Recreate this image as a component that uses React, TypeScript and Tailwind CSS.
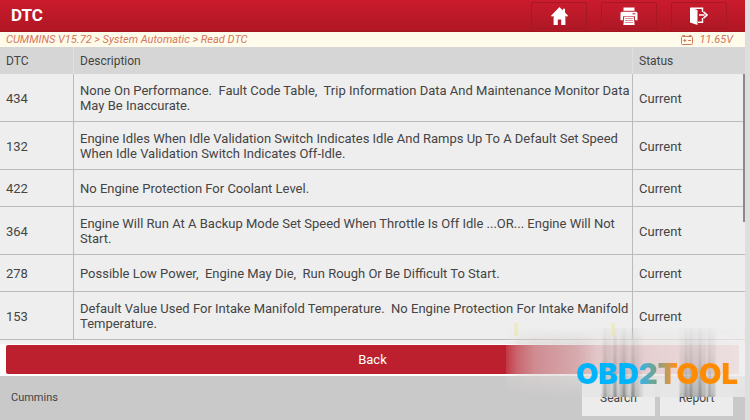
'use client';

import React from 'react';

interface TroubleCode {
  code: string;
  description: string;
  status: string;
}

const CODES: TroubleCode[] = [
  {
    code: '434',
    description: 'None On Performance.  Fault Code Table,  Trip Information Data And Maintenance Monitor Data May Be Inaccurate.',
    status: 'Current',
  },
  {
    code: '132',
    description: 'Engine Idles When Idle Validation Switch Indicates Idle And Ramps Up To A Default Set Speed When Idle Validation Switch Indicates Off-Idle.',
    status: 'Current',
  },
  { code: '422', description: 'No Engine Protection For Coolant Level.', status: 'Current' },
  {
    code: '364',
    description: 'Engine Will Run At A Backup Mode Set Speed When Throttle Is Off Idle ...OR... Engine Will Not Start.',
    status: 'Current',
  },
  { code: '278', description: 'Possible Low Power,  Engine May Die,  Run Rough Or Be Difficult To Start.', status: 'Current' },
  {
    code: '153',
    description: 'Default Value Used For Intake Manifold Temperature.  No Engine Protection For Intake Manifold Temperature.',
    status: 'Current',
  },
];

// [x, width, opacity]
const STREAKS = [
  [97, 4, 0.55],
  [102, 3, 0.35],
  [107, 4, 0.7],
  [113, 2, 0.5],
  [116, 4, 0.75],
  [121, 2, 0.4],
  [125, 4, 0.75],
  [130, 3, 0.4],
  [134, 2, 0.25],
  [174, 3, 0.35],
  [178, 4, 0.65],
  [183, 4, 0.75],
  [188, 3, 0.5],
  [192, 4, 0.75],
  [197, 3, 0.5],
  [202, 3, 0.65],
  [206, 3, 0.4],
];

function HomeIcon() {
  return (
    <svg width="17" height="18" viewBox="0 0 17 18" fill="#fff" aria-hidden="true">
      <path d="M8.5 0 0 8.7l1 1.1 1.6-1V18h4.2v-5.4h3.4V18h4.2V8.8l1.6 1 1-1.1-3-3.1V1.8h-2.2v1.6z" />
    </svg>
  );
}

function PrinterIcon() {
  return (
    <svg width="18" height="18" viewBox="0 0 18 18" aria-hidden="true">
      <path d="M3.5 3.8V.5h11v3.3z" fill="#fff" />
      <path d="M2 4.8h14q1.5 0 1.5 1.5v6.9h-2.6V9.2H3.1v4H.5V6.3q0-1.5 1.5-1.5z" fill="#fff" />
      <path d="M12.5 6.8h3" stroke="#c21a2b" strokeWidth="1" />
      <path d="M4.3 9.8h9.4l1 8.2H3.3z" fill="#fff" />
      <path d="M5.2 11.5h7.6M5.2 13.5h7.6M5 15.5h8" stroke="#dc7c86" strokeWidth=".9" />
    </svg>
  );
}

function ExitIcon() {
  return (
    <svg width="18" height="18" viewBox="0 0 18 18" fill="none" aria-hidden="true">
      <path d="M0 .5 7.5 3v15L0 15.5z" fill="#fff" />
      <path d="M1 1.2h11.5V5M8 15.2h4.5V11" stroke="#fff" strokeWidth="1.4" />
      <path d="M9 8h5.5M13.5 4.8 17 8l-3.5 3.2" stroke="#fff" strokeWidth="1.6" />
    </svg>
  );
}

function BatteryIcon() {
  return (
    <svg width="12" height="10" viewBox="0 0 12 10" fill="none" stroke="#d4785c" aria-hidden="true">
      <rect x=".5" y="1.5" width="11" height="8" rx="1" />
      <path d="M1.5 .5h2.5M8 .5h2.5M2.3 5.5h3M3.8 4v3M7 5.5h3" />
    </svg>
  );
}

function Watermark() {
  return (
    <div className="pointer-events-none absolute right-0 bottom-[22px] h-[76px] w-[239px]">
      <svg width="239" height="76" viewBox="0 -6 239 76" className="absolute inset-0" aria-hidden="true">
        <defs>
          <linearGradient id="haze">
            <stop offset="0" stopColor="#ececec" stopOpacity=".12" />
            <stop offset=".05" stopColor="#e0d4d4" stopOpacity=".4" />
            <stop offset=".12" stopColor="#dcd4d4" stopOpacity=".6" />
            <stop offset=".3" stopColor="#ded8d8" stopOpacity=".76" />
            <stop offset=".38" stopColor="#e8e2e2" stopOpacity=".86" />
            <stop offset="1" stopColor="#f0eded" stopOpacity=".94" />
          </linearGradient>
          <linearGradient id="fade" x2="0" y2="1">
            <stop offset="0" stopColor="#fff" stopOpacity="0" />
            <stop offset=".22" stopColor="#fff" />
            <stop offset=".65" stopColor="#fff" />
            <stop offset="1" stopColor="#fff" stopOpacity="0" />
          </linearGradient>
          <linearGradient id="streak" x2="0" y2="1">
            <stop offset="0" stopColor="#888" stopOpacity=".1" />
            <stop offset=".4" stopColor="#777" stopOpacity=".4" />
            <stop offset="1" stopColor="#555" stopOpacity=".85" />
          </linearGradient>
          <mask id="hazeMask">
            <rect width="239" height="70" fill="url(#fade)" />
          </mask>
          <filter id="soften">
            <feGaussianBlur stdDeviation=".9 0" />
          </filter>
        </defs>
        <rect width="239" height="70" fill="url(#haze)" mask="url(#hazeMask)" />
        <rect x="77" y="50" width="162" height="19" fill="#e6e6e6" opacity=".9" />
        <g filter="url(#soften)">
          {STREAKS.map(([x, width, opacity]) => (
            <rect key={x} x={x} width={width} height="69" fill="url(#streak)" opacity={opacity} />
          ))}
          <path d="M10 -5v13M107 -5v13" stroke="#ece6a0" strokeWidth="2" />
        </g>
      </svg>
      <p className="absolute right-[7px] bottom-2 bg-linear-to-r from-[#00b4fc] from-38% via-[#77a07c] via-50% to-[#ff8c00] to-62% bg-clip-text font-[Inter,sans-serif] text-[29px] leading-8 font-black whitespace-nowrap text-transparent">
        OBD2TOOL
      </p>
    </div>
  );
}

const toolButton =
  'flex h-[27px] w-[56px] items-center justify-center rounded-xs border border-[#a51824] bg-linear-to-b from-[#c71b2d] to-[#b01825]';

export default function App() {
  return (
    <div className="bg-[#dedede] pr-[5px] font-[Roboto,sans-serif] text-[#444]">
      <div className="relative bg-white">
        <header className="flex h-8 items-center justify-between border-b border-[#a01722] bg-linear-to-b from-[#cb1b2d] to-[#b01723] pr-[18px] pl-[11px]">
          <h1 className="text-[17px] font-bold text-white">DTC</h1>
          <div className="flex gap-[14px]">
            <button type="button" aria-label="Home" className={toolButton}>
              <HomeIcon />
            </button>
            <button type="button" aria-label="Print" className={toolButton}>
              <PrinterIcon />
            </button>
            <button type="button" aria-label="Exit" className={toolButton}>
              <ExitIcon />
            </button>
          </div>
        </header>

        <div className="flex h-[15px] items-center justify-between bg-[#fffbeb] pr-3 pl-[6px] text-[11px] leading-[15px] text-[#d4785c] italic">
          <p>CUMMINS V15.72 &gt; System Automatic &gt; Read DTC</p>
          <p className="flex items-center gap-[6px]">
            <BatteryIcon />
            11.65V
          </p>
        </div>

        <div className="relative border-b-4 border-[#f0f0f0]">
          <table className="w-full table-fixed border-separate border-spacing-0 text-left text-[13px] leading-[15px]">
            <colgroup>
              <col className="w-[74px]" />
              <col />
              <col className="w-28" />
            </colgroup>
            <thead className="bg-[#d6d6d6] text-xs">
              <tr className="h-[27px]">
                <th scope="col" className="border-r border-[#e0e0e0] pl-[6px] font-normal">DTC</th>
                <th scope="col" className="border-r border-[#e0e0e0] pl-[6px] font-normal">Description</th>
                <th scope="col" className="pl-[6px] font-normal">Status</th>
              </tr>
            </thead>
            <tbody className="bg-[#eee]">
              {CODES.map((row) => (
                <tr key={row.code} className="h-[37px]">
                  <td className="border-r border-b border-[#bbb] pt-px pl-[6px]">{row.code}</td>
                  <td className="border-r border-b border-[#bbb] pt-[9px] pb-2 pl-[6px] whitespace-pre-wrap">{row.description}</td>
                  <td className="border-b border-[#bbb] pt-px pl-[6px]">{row.status}</td>
                </tr>
              ))}
            </tbody>
          </table>
          <div className="absolute top-[27px] right-0 h-[148px] w-[2px] bg-[#8a8a8a]" />
        </div>

        <div className="px-[6px] pt-px pb-[2px]">
          <button type="button" className="block h-[29px] w-full rounded-xs bg-[#bc202e] text-[13px] text-white">
            Back
          </button>
        </div>

        <footer className="flex h-11 items-center justify-between bg-[#c9c9c9] pr-3 pl-[11px]">
          <p className="text-[11px]">Cummins</p>
          <div className="flex gap-[5px] text-xs">
            <button type="button" className="h-9 w-[73px] bg-[#ececec]">Search</button>
            <button type="button" className="h-9 w-[73px] bg-[#ececec]">Report</button>
          </div>
        </footer>

        <Watermark />
      </div>
    </div>
  );
}
